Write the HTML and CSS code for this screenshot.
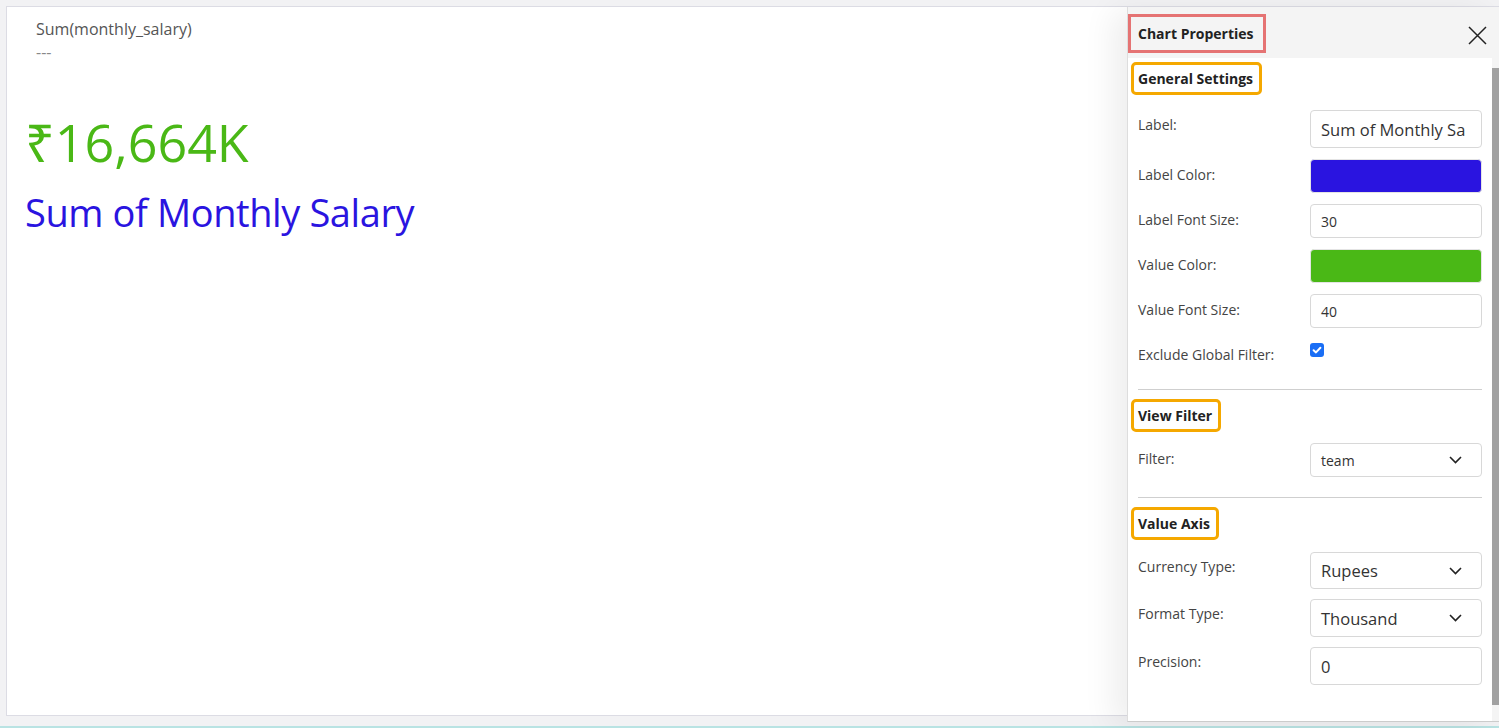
FILE: index.html
```html
<!DOCTYPE html>
<html lang="en">
<head>
  <meta charset="UTF-8" />
  <meta name="viewport" content="width=device-width, initial-scale=1" />
  <title>KPI Chart</title>
  <link rel="stylesheet" href="styles.css">
</head>
<body>
  <div class="page">
    <div class="card">
      <div class="card-title">Sum(monthly_salary)</div>
      <div class="card-sub">---</div>
      <div class="kpi-value">₹16,664K</div>
      <div class="kpi-label">Sum of Monthly Salary</div>
    </div>
    <div class="footer-line"></div>
  </div>

  <aside class="panel">
    <div class="panel-header">
      <span class="panel-title">Chart Properties</span>
      <button class="close-btn" type="button" aria-label="Close">
        <svg width="19" height="19" viewBox="0 0 19 19">
          <path d="M1 1 L18 18 M18 1 L1 18" stroke="#222" stroke-width="1.5" fill="none" />
        </svg>
      </button>
    </div>
    <div class="panel-body">
      <div class="panel-content">
        <div class="section-title first">General Settings</div>
        <div class="rows general">
          <div class="row tall">
            <label>Label:</label>
            <div class="field text big">Sum of Monthly Sa</div>
          </div>
          <div class="row">
            <label>Label Color:</label>
            <div class="field swatch blue"></div>
          </div>
          <div class="row">
            <label>Label Font Size:</label>
            <div class="field text">30</div>
          </div>
          <div class="row">
            <label>Value Color:</label>
            <div class="field swatch green"></div>
          </div>
          <div class="row">
            <label>Value Font Size:</label>
            <div class="field text">40</div>
          </div>
          <div class="row">
            <label>Exclude Global Filter:</label>
            <span class="checkbox">
              <svg width="14" height="14" viewBox="0 0 14 14">
                <path d="M3.6 7.2 L6 9.4 L10.4 4.8" stroke="#fff" stroke-width="2" fill="none" stroke-linecap="round" stroke-linejoin="round" />
              </svg>
            </span>
          </div>
        </div>

        <hr class="divider first-div">

        <div class="section-title">View Filter</div>
        <div class="rows">
          <div class="row">
            <label>Filter:</label>
            <div class="field select">
              <span>team</span>
              <svg width="13" height="8" viewBox="0 0 13 8"><path d="M1 1 L6.5 6.5 L12 1" stroke="#222" stroke-width="1.6" fill="none" /></svg>
            </div>
          </div>
        </div>

        <hr class="divider second-div">

        <div class="section-title">Value Axis</div>
        <div class="rows axis">
          <div class="row mid">
            <label>Currency Type:</label>
            <div class="field select big">
              <span>Rupees</span>
              <svg width="13" height="8" viewBox="0 0 13 8"><path d="M1 1 L6.5 6.5 L12 1" stroke="#222" stroke-width="1.6" fill="none" /></svg>
            </div>
          </div>
          <div class="row tall">
            <label>Format Type:</label>
            <div class="field select big">
              <span>Thousand</span>
              <svg width="13" height="8" viewBox="0 0 13 8"><path d="M1 1 L6.5 6.5 L12 1" stroke="#222" stroke-width="1.6" fill="none" /></svg>
            </div>
          </div>
          <div class="row tall">
            <label>Precision:</label>
            <div class="field text big">0</div>
          </div>
        </div>
      </div>
      <div class="scrollbar"><div class="thumb"></div></div>
    </div>
  </aside>
</body>
</html>
```

FILE: styles.css
```css
* {
  box-sizing: border-box;
}
body {
  margin: 0;
  font-family: "Open Sans", "Noto Sans", sans-serif;
  background-color: #f2f2f4;
  color: #333;
  overflow: hidden;
}
.page {
  height: 728px;
  padding: 6px 0 0 6px;
  display: flex;
  flex-direction: column;
}
.card {
  height: 710px;
  background: #fff;
  border: 1px solid #dcdce4;
  padding: 12px 0 0 18px;
}
.card-title {
  padding-left: 11px;
  font-size: 16px;
  line-height: 20px;
  color: #555;
}
.card-sub {
  padding-left: 11px;
  margin-top: 3px;
  font-size: 16px;
  line-height: 20px;
  color: #888;
}
.kpi-value {
  margin-top: 50px;
  font-size: 52px;
  line-height: 60px;
  color: #4ab816;
}
.kpi-label {
  margin-top: 15px;
  font-size: 38px;
  letter-spacing: -0.4px;
  line-height: 50px;
  color: #2a14e0;
}
.footer-line {
  margin-top: auto;
  height: 2px;
  margin-left: -6px;
  background: #b9e3e3;
}

/* properties panel */
.panel {
  position: absolute;
  top: 7px;
  right: 0;
  width: 372px;
  height: 715px;
  background: #fff;
  border-left: 1px solid #ddd;
  border-bottom: 1px solid #ccc;
  box-shadow: -14px 4px 30px rgba(0, 0, 0, 0.07);
  display: flex;
  flex-direction: column;
}
.panel-header {
  height: 51px;
  flex: none;
  background: #f4f4f4;
  display: flex;
  align-items: flex-start;
  justify-content: space-between;
  padding: 7px 0 0 0;
}
.panel-title {
  border: 3px solid #e57373;
  padding: 8px 9px 8px 7px;
  font-size: 14px;
  line-height: 17px;
  font-weight: 700;
  color: #222;
}
.close-btn {
  background: none;
  border: none;
  padding: 0;
  margin: 12px 12px 0 0;
  width: 19px;
  height: 19px;
  cursor: pointer;
}
.close-btn svg {
  display: block;
}
.panel-body {
  flex: 1;
  display: flex;
  min-height: 0;
}
.panel-content {
  flex: 1;
  padding: 0 10px 0 10px;
}
.scrollbar {
  width: 7px;
  flex: none;
  padding: 10px 0 16px 0;
  background: #f4f4f4;
}
.thumb {
  height: 100%;
  background: #a1a1a1;
}
.section-title {
  display: inline-block;
  margin: 9px 0 0 -7px;
  border: 3px solid #f5a800;
  border-radius: 5px;
  padding: 5px 6px 5px 4px;
  font-size: 14px;
  line-height: 17px;
  font-weight: 700;
  color: #222;
}
.section-title.first {
  margin-top: 4px;
}
.rows {
  margin-top: 11px;
  display: flex;
  flex-direction: column;
  gap: 11px;
}
.rows.general {
  margin-top: 15px;
}
.rows.axis {
  margin-top: 12px;
  gap: 10px;
}
.row {
  display: flex;
  align-items: flex-start;
  height: 34px;
}
.row.mid {
  height: 37px;
}
.row.tall {
  height: 38px;
}
.row label {
  width: 172px;
  flex: none;
  padding-top: 7px;
  font-size: 14px;
  line-height: 18px;
  color: #444;
}
.row.tall label,
.row.mid label {
  padding-top: 6px;
}
.field {
  width: 172px;
  height: 100%;
  border: 1px solid #d8d8d8;
  border-radius: 4px;
  font-size: 14px;
  color: #333;
  display: flex;
  align-items: center;
  padding: 0 10px;
}
.field.big {
  font-size: 16.5px;
}
.swatch {
  border-color: #e4e4e4;
}
.swatch.blue {
  background: #2a14e0;
}
.swatch.green {
  background: #4ab816;
}
.select {
  justify-content: space-between;
  padding-right: 19px;
}
.checkbox {
  margin-top: 4px;
  width: 14px;
  height: 14px;
  border-radius: 3px;
  background: #1a6ef5;
  display: block;
}
.checkbox svg {
  display: block;
}
.divider {
  border: none;
  border-top: 1px solid #cfcfcf;
  margin: 0;
}
.first-div {
  margin-top: 16px;
}
.second-div {
  margin-top: 20px;
}
```
